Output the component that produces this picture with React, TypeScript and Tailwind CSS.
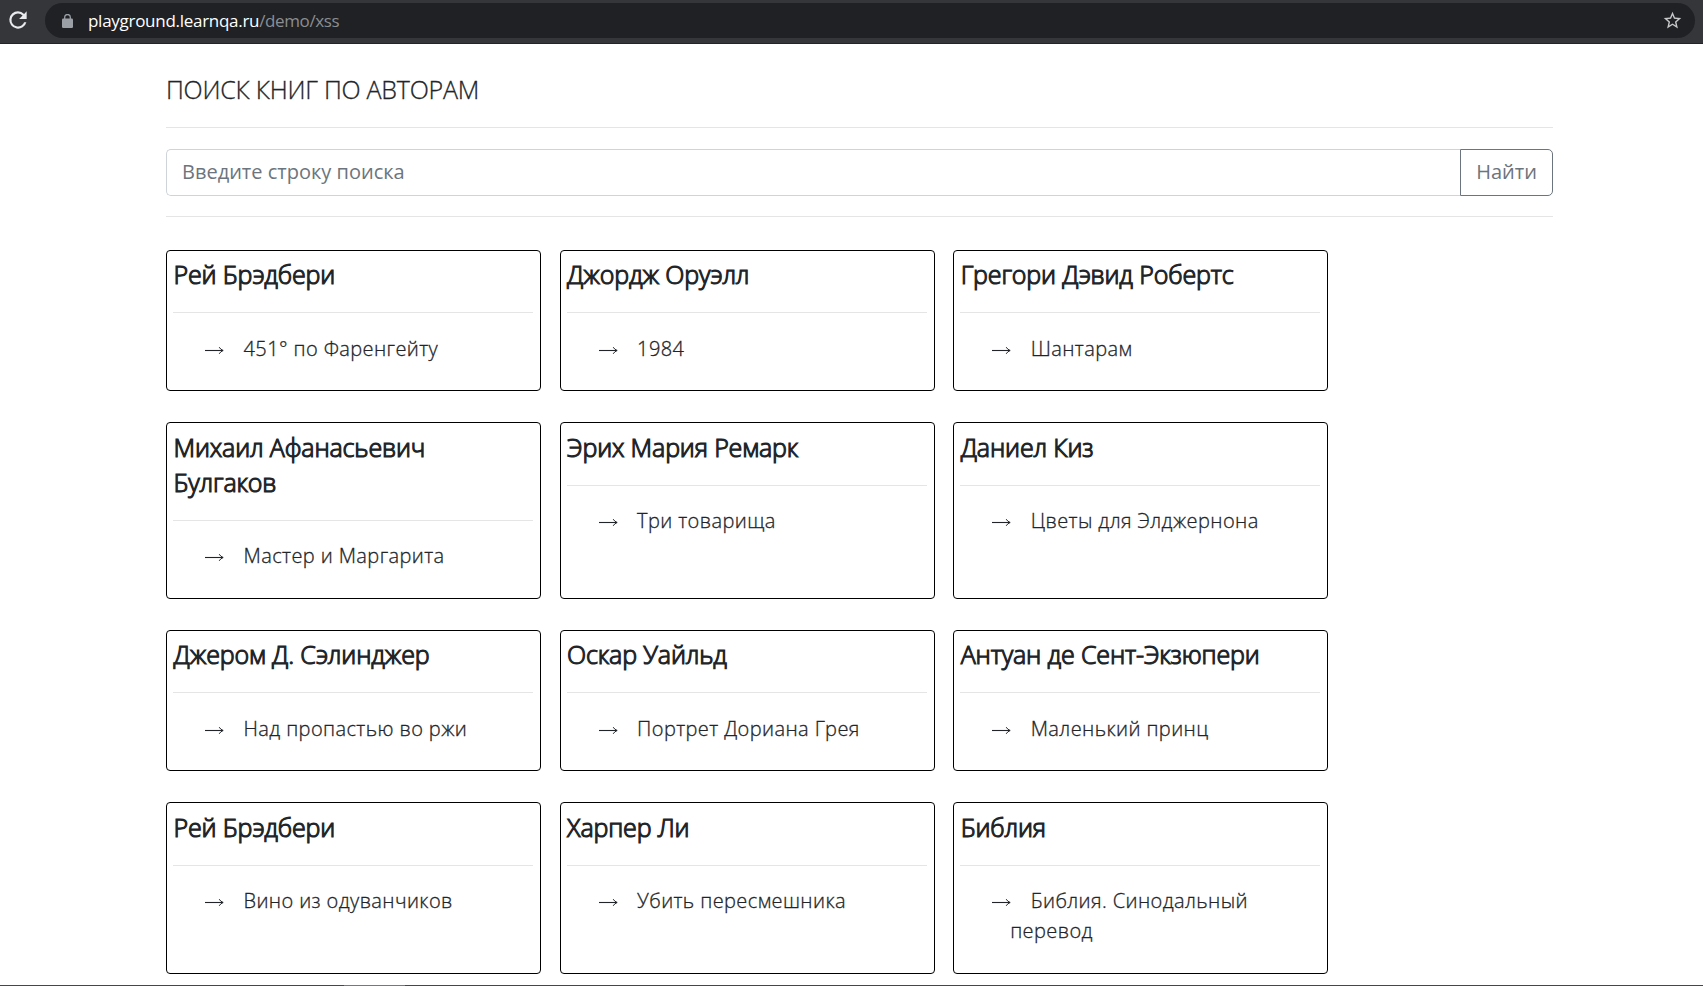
type Book = { author: string; title: string };

const rows: { height: string; spacing: string; books: Book[] }[] = [
  {
    height: 'h-[141px] mb-[31px]',
    spacing: 'pt-[6px] [&_ul]:mt-[21px]',
    books: [
      { author: 'Рей Брэдбери', title: '451° по Фаренгейту' },
      { author: 'Джордж Оруэлл', title: '1984' },
      { author: 'Грегори Дэвид Робертс', title: 'Шантарам' },
    ],
  },
  {
    height: 'h-[177px] mb-[31px]',
    spacing: 'pt-[7px] [&_ul]:mt-[20px]',
    books: [
      { author: 'Михаил Афанасьевич Булгаков', title: 'Мастер и Маргарита' },
      { author: 'Эрих Мария Ремарк', title: 'Три товарища' },
      { author: 'Даниел Киз', title: 'Цветы для Элджернона' },
    ],
  },
  {
    height: 'h-[141px] mb-[31px]',
    spacing: 'pt-[6px] [&_ul]:mt-[21px]',
    books: [
      { author: 'Джером Д. Сэлинджер', title: 'Над пропастью во ржи' },
      { author: 'Оскар Уайльд', title: 'Портрет Дориана Грея' },
      { author: 'Антуан де Сент-Экзюпери', title: 'Маленький принц' },
    ],
  },
  {
    height: 'h-[172px]',
    spacing: 'pt-[7px] [&_ul]:mt-[20px]',
    books: [
      { author: 'Рей Брэдбери', title: 'Вино из одуванчиков' },
      { author: 'Харпер Ли', title: 'Убить пересмешника' },
      { author: 'Библия', title: 'Библия. Синодальный перевод' },
    ],
  },
];

function Arrow() {
  return (
    <svg className="mr-[19.5px] inline-block h-[9px] w-[19px] align-[1px]" viewBox="0 0 19 9" fill="none" stroke="#212529">
      <path d="M0 4.5H18" strokeWidth="1.1" />
      <path d="M14.2 1.2Q15.6 3.6 18.2 4.5Q15.6 5.4 14.2 7.8" strokeWidth="1" />
    </svg>
  );
}

function BookCard({ author, title, spacing }: Book & { spacing: string }) {
  return (
    <article className={`w-[375px] shrink-0 rounded-[4px] border border-black px-[6px] ${spacing}`}>
      <h5 className="mb-5 pl-[0.5px] text-[25px] leading-[35px] font-light tracking-[-0.15px] [-webkit-text-stroke:1.1px_#212529]">{author}</h5>
      <hr className="mr-px border-[#e5e5e5]" />
      <ul className="pl-[50px]">
        <li className="indent-[-18px] tracking-[0.4px] [-webkit-text-stroke:0.3px_#212529]">
          <Arrow />
          {title}
        </li>
      </ul>
    </article>
  );
}

function BrowserBar() {
  return (
    <header className="flex h-[44px] items-start border-b border-[#242427] bg-[#35363a] pt-[3px]">
      <div className="flex h-[35px] w-[45px] items-center pb-px pl-[5px]">
        <svg className="size-[26px]" viewBox="0 0 24 24" fill="#e8eaed">
          <path d="M17.65 6.35A7.96 7.96 0 0 0 12 4a8 8 0 1 0 7.73 10h-2.08A6 6 0 1 1 12 6c1.66 0 3.14.69 4.22 1.78L13 11h7V4z" />
        </svg>
      </div>
      <div className="flex h-[35px] w-[1650px] items-center rounded-full bg-[#202124] pr-[12px] pl-[17px]">
        <svg className="h-[14px] w-[11px]" viewBox="0 0 11 14" fill="none">
          <rect y="4.5" width="11" height="9.5" rx="1.2" fill="#9aa0a6" />
          <path d="M2.7 5V3.3a2.8 2.8 0 0 1 5.6 0V5" stroke="#9aa0a6" strokeWidth="1.3" />
        </svg>
        <span className="ml-[15px] font-['Open_Sans'] text-[17px] leading-[34px] font-normal tracking-[-0.4px] text-[#8b8e92]">
          <span className="tracking-[-0.28px] text-white">playground.learnqa.ru</span>/demo/xss
        </span>
        <svg className="ml-auto size-[21px]" viewBox="0 0 24 24" fill="#c7c8ca">
          <path d="M22 9.24l-7.19-.62L12 2 9.19 8.63 2 9.24l5.46 4.73L5.82 21 12 17.27 18.18 21l-1.63-7.03L22 9.24zM12 15.4l-3.76 2.27 1-4.28-3.32-2.88 4.38-.38L12 6.1l1.71 4.04 4.38.38-3.32 2.88 1 4.28L12 15.4z" />
        </svg>
      </div>
    </header>
  );
}

export default function App() {
  return (
    <div className="flex h-[986px] w-[1703px] flex-col overflow-hidden bg-white font-['Open_Sans',sans-serif] text-[20px] leading-[30px] font-light text-[#212529]">
      <BrowserBar />
      <main className="ml-[166px] w-[1387px] grow">
        <h1 className="pt-[28px] text-[25px] leading-[35px] tracking-[-0.25px] [-webkit-text-stroke:0.3px_#212529]">ПОИСК КНИГ ПО АВТОРАМ</h1>
        <hr className="mt-5 border-[#e5e5e5]" />
        <form className="mt-[21px] flex h-[47px]">
          <input
            className="min-w-0 grow rounded-l-[5px] border border-r-0 border-[#ced4da] px-[15px] pb-px font-normal placeholder:text-[#6c757d]"
            placeholder="Введите строку поиска"
          />
          <button type="button" className="w-[93px] rounded-r-[5px] border border-[#6c757d] pb-px font-normal text-[#6c757d]">
            Найти
          </button>
        </form>
        <hr className="mt-5 mb-[33px] border-[#e5e5e5]" />
        {rows.map((row, i) => (
          <section key={i} className={`flex gap-[18.6px] ${row.height}`}>
            {row.books.map((book) => (
              <BookCard key={book.title} {...book} spacing={row.spacing} />
            ))}
          </section>
        ))}
      </main>
      <footer className="flex h-px shrink-0 bg-[#46464a]">
        <div className="ml-[344px] w-[61px] bg-[#77777b]" />
      </footer>
    </div>
  );
}
